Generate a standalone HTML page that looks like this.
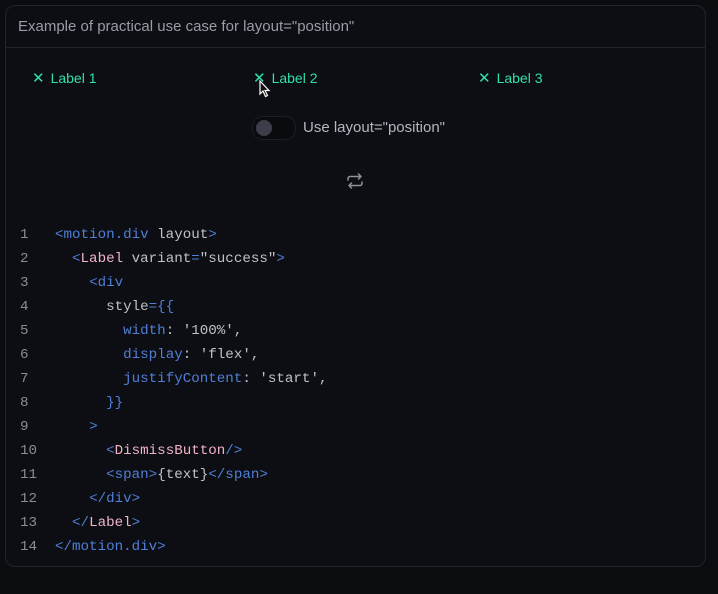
<!DOCTYPE html>
<html><head><style>
html,body{margin:0;padding:0;background:#0b0c10;width:718px;height:594px;overflow:hidden;font-family:"Liberation Sans",sans-serif}
.card{position:absolute;left:5px;top:5px;width:699px;height:560px;border:1px solid #22242b;border-radius:10px;background:#0d0e13}
.hdr{height:41px;border-bottom:1px solid #22242b;color:#9a9ca6;font-size:15px;line-height:41px;padding-left:12px}
.lbl{position:absolute;top:69px;color:#2fe0a8;font-size:14px;line-height:18px}
.lbl span.x{font-size:15px;margin-right:6px}
.tog{position:absolute;left:252px;top:116px;width:42px;height:22px;border-radius:11px;background:#0a0b0e;border:1px solid #1c1e24}
.tog i{position:absolute;left:3px;top:3px;width:16px;height:16px;border-radius:50%;background:#3c3f4a}
.tl{position:absolute;left:303px;top:119px;color:#b4b6c0;font-size:15px}
pre{position:absolute;left:0;top:223px;margin:0;font-family:"Liberation Mono",monospace;font-size:14.2px;line-height:24px;color:#c0c2ca}
.n{display:inline-block;width:55px;padding-left:20px;box-sizing:border-box;color:#8a8c96}
.b{color:#4f7fd6}.p{color:#f0b3c8}
</style></head><body>
<div class="card"><div class="hdr">Example of practical use case for layout="position"</div></div>
<div class="lbl" style="left:32px"><span class="x">✕</span>Label 1</div>
<div class="lbl" style="left:253px"><span class="x">✕</span>Label 2</div>
<div class="lbl" style="left:478px"><span class="x">✕</span>Label 3</div>
<svg style="position:absolute;left:259px;top:80px" width="13" height="18" viewBox="0 0 13 18"><path d="M1 1 L1 14 L4 11 L6.5 16.5 L8.5 15.5 L6 10.5 L10 10.5 Z" fill="#111" stroke="#fff" stroke-width="1.2"/></svg>
<div class="tog"><i></i></div>
<div class="tl">Use layout="position"</div>
<svg style="position:absolute;left:346px;top:172px" width="18" height="18" viewBox="0 0 18 18" fill="none" stroke="#8f929c" stroke-width="1.5" stroke-linecap="round" stroke-linejoin="round"><path d="M2 8V6.5A2 2 0 0 1 4 4.5H15M12.5 2L15 4.5L12.5 7M16 10v1.5a2 2 0 0 1-2 2H3M5.5 16L3 13.5L5.5 11"/></svg>
<pre><span class="n">1</span><span class="b">&lt;motion.div</span> layout<span class="b">&gt;</span>
<span class="n">2</span>  <span class="b">&lt;</span><span class="p">Label</span> variant<span class="b">=</span>"success"<span class="b">&gt;</span>
<span class="n">3</span>    <span class="b">&lt;div</span>
<span class="n">4</span>      style<span class="b">={{</span>
<span class="n">5</span>        <span class="b">width</span>: '100%',
<span class="n">6</span>        <span class="b">display</span>: 'flex',
<span class="n">7</span>        <span class="b">justifyContent</span>: 'start',
<span class="n">8</span>      <span class="b">}}</span>
<span class="n">9</span>    <span class="b">&gt;</span>
<span class="n">10</span>      <span class="b">&lt;</span><span class="p">DismissButton</span><span class="b">/&gt;</span>
<span class="n">11</span>      <span class="b">&lt;span&gt;</span>{text}<span class="b">&lt;/span&gt;</span>
<span class="n">12</span>    <span class="b">&lt;/div&gt;</span>
<span class="n">13</span>  <span class="b">&lt;/</span><span class="p">Label</span><span class="b">&gt;</span>
<span class="n">14</span><span class="b">&lt;/motion.div&gt;</span></pre>
</body></html>
